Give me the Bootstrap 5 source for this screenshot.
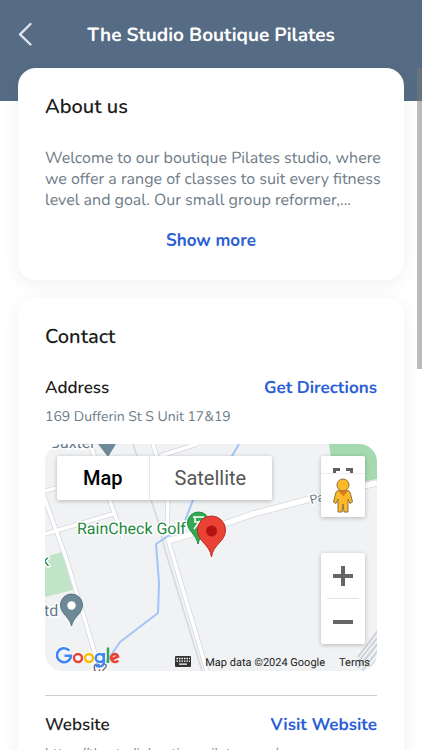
<!DOCTYPE html>
<html lang="en">
<head>
<meta charset="utf-8">
<meta name="viewport" content="width=device-width, initial-scale=1">
<title>The Studio Boutique Pilates</title>
<link href="https://cdn.jsdelivr.net/npm/bootstrap@5.3.0/dist/css/bootstrap.min.css" rel="stylesheet">
<style>
  body { font-family: Nunito, Lato, "Open Sans", sans-serif; color: #1c1e20; background: #fff; text-rendering: geometricPrecision; }
  .app-bar { background: #566c84; height: 101px; color: #fff; padding: 18px 16px 0; }
  .app-title { font-size: 19px; line-height: 34px; font-weight: 700; padding-right: 20px; }
  .back-btn { width: 20px; height: 32px; color: #dfe5f0; }
  .panels { margin-top: -33px; padding: 0 18px; gap: 18px; }
  .panel { border: 0; border-radius: 18px; padding: 27px; box-shadow: 0 4px 18px rgba(40, 50, 100, .07); }
  .panel-title { font-size: 20px; line-height: 26px; font-weight: 600; }
  .about-text { font-size: 16px; line-height: 21px; color: #6e7c87; margin: 27px -8px 18px 0; }
  .row-title { font-size: 17px; line-height: 24px; font-weight: 600; }
  .action { font-size: 17px; line-height: 24px; font-weight: 700; color: #2b60d6; text-decoration: none; }
  .address-row { margin-top: 26px; }
  .detail { font-size: 14px; line-height: 20px; color: #6e7c87; padding-top: 6px; }
  .map-box { height: 227px; border-radius: 18px; background: #f0f2f4; font-family: Roboto, sans-serif; margin: 17px 0 24px; }
  .map-art text { font-family: Roboto, sans-serif; }
  .map-layer { inset: 0; padding: 12px 12px 0; }
  .map-ctl { background: #fff; box-shadow: 0 1px 4px rgba(0, 0, 0, .25); border-radius: 2px; }
  .map-ctl button { background: none; border: 0; padding: 0; color: #565656; }
  .type-ctl button { font-size: 20px; line-height: 44px; padding: 0 26px; }
  .type-ctl .selected { color: #000; font-weight: 500; box-shadow: 1px 0 0 #e8e8e8; }
  .ctl-col { width: 44px; gap: 36px; }
  .view-ctl { height: 61px; }
  .zoom-ctl { height: 91px; }
  .zoom-ctl hr { margin: 0 6px; color: #999; }
  .map-foot { left: 0; right: 0; bottom: 0; padding: 0 7px 0 11px; height: 26px; gap: 14px; font-size: 11px; line-height: 16px; color: #222; }
  .map-foot a { color: #222; text-decoration: none; }
  .divider { margin: 0 0 18px; color: #8a9499; opacity: .45; }
  .scroll-thumb { top: 68px; right: 0; width: 5px; height: 301px; background: rgba(120, 120, 120, .5); }
</style>
<script src="https://cdn.jsdelivr.net/npm/bootstrap@5.3.0/dist/js/bootstrap.bundle.min.js"></script>
</head>
<body>
<div class="vh-100 overflow-hidden position-relative">
  <header class="app-bar d-flex align-items-start">
    <button class="back-btn btn p-0 border-0" type="button" aria-label="Back">
      <svg class="d-block" width="20" height="32" viewBox="0 0 20 32" fill="none" stroke="currentColor" stroke-width="2.4" stroke-linecap="round" stroke-linejoin="round"><path d="M14.500 6 L4 16.300 L14.500 26.500"/></svg>
    </button>
    <h1 class="app-title flex-fill text-center mb-0">The Studio Boutique Pilates</h1>
  </header>

  <main class="panels d-flex flex-column">
    <section class="panel card">
      <h2 class="panel-title mb-0">About us</h2>
      <p class="about-text">Welcome to our boutique Pilates studio, where we offer a range of classes to suit every fitness level and goal. Our small group reformer,...</p>
      <button class="action btn p-0 border-0 align-self-center" type="button">Show more</button>
    </section>

    <section class="panel card">
      <h2 class="panel-title mb-0">Contact</h2>
      <div class="address-row d-flex justify-content-between">
        <h3 class="row-title mb-0">Address</h3>
        <a class="action" href="#directions">Get Directions</a>
      </div>
      <div class="detail">169 Dufferin St S Unit 17&amp;19</div>

      <div class="map-box position-relative overflow-hidden">
        <svg class="map-art d-block w-100 h-100" viewBox="0 0 332 227" preserveAspectRatio="xMidYMid slice" fill="none">
          <path fill="#a5d9b0" d="M284 0H332V35L322 37L290 44Z"/>
          <path fill="#c0e4c8" d="M0 113L17 108L28 146L0 153Z"/>
          <g stroke="#d4d7dc" stroke-width="5">
            <path d="M-4 44L22 117L55 226M0 47L62 30M0 90L68 70M45 0L78 94M108 0L123 50L122 92L162 227M115 12L152 0"/>
            <path stroke-width="7" d="M123 97L182 79L208 70L265 55L332 39"/>
          </g>
          <g stroke="#fff" stroke-width="3.500">
            <path d="M-4 44L22 117L55 226M0 47L62 30M0 90L68 70M45 0L78 94M108 0L123 50L122 92L162 227M115 12L152 0"/>
            <path stroke-width="5.500" d="M123 97L182 79L208 70L265 55L332 39"/>
          </g>
          <path stroke="#d5d8dc" stroke-width="1.500" d="M88 0L112 74L120 106L157 227"/>
          <path stroke="#a2c4fa" stroke-width="2" stroke-linejoin="round" d="M194 0L187 12L148 56L138 82L111 100L114 139L113 169L75 198L58 223"/>
          <g stroke="#cdd0d5" stroke-width="2"><path d="M335 184L313 213M337 188L313 218M339 192L313 224M341 196L317 227M343 200L322 228"/></g>
          <g stroke="#fff" stroke-width="3" paint-order="stroke" stroke-linejoin="round">
            <text x="5" y="4" font-size="16" fill="#61788a">Baxter</text>
            <text x="32" y="90" font-size="16" fill="#22893f">RainCheck Golf</text>
            <text x="266" y="60" font-size="12" fill="#61788a" transform="rotate(-14 266 60)">Park</text>
            <text x="-4" y="122" font-size="16" fill="#22893f">k</text>
            <text x="-1" y="172" font-size="16" fill="#61788a">td</text>
            <text x="48" y="228" font-size="12" fill="#4a4a4a">C2</text>
          </g>
          <path fill="#6d8998" d="M53 0H71L63 13Z"/>
          <path fill="#6d8998" stroke="#5a7482" d="M26.500 182C25 173 15.500 170 15.500 161A11 11 0 0 1 37.500 161C37.500 170 28 173 26.500 182Z"/>
          <circle cx="26.500" cy="161.500" r="4.200" fill="#fff"/>
          <path fill="#34a853" stroke="#1e8e3e" d="M153 100C151 90 142.500 87 142.500 79A11 11 0 0 1 164.500 79C164.500 87 155 90 153 100Z"/>
          <path stroke="#fff" stroke-width="1.600" d="M148 73H159M150 73V78H157M155 77L149 85M157 76V85"/>
          <path fill="#ea4335" stroke="#b92b20" d="M166.500 113C165 100 152.500 98 152.500 86A14 14 0 0 1 180.500 86C180.500 98 168 100 166.500 113Z"/>
          <circle cx="166.500" cy="87" r="5.500" fill="#b31412"/>
        </svg>

        <div class="map-layer position-absolute d-flex justify-content-between align-items-start">
          <div class="type-ctl map-ctl d-flex" role="group" aria-label="Map type">
            <button class="selected" type="button">Map</button>
            <button type="button">Satellite</button>
          </div>
          <div class="ctl-col d-flex flex-column">
            <div class="view-ctl map-ctl">
              <button class="d-block w-100" type="button" aria-label="Street view and full screen">
                <svg class="d-block" width="44" height="61" viewBox="0 0 44 61" fill="none">
                  <path stroke="#606060" stroke-width="3" d="M13.500 17V13.500H19M25 13.500H30.500V17"/>
                  <path stroke="#eee" d="M0 17.500H44"/>
                  <path fill="#fbb829" stroke="#8a733e" stroke-linejoin="round" d="M17 34.500H27Q29 35 29.500 38L31.500 46L29 47.500L27 43V56H23L22 48L21 56H17V43L15 47.500L12.500 46L14.500 38Q15 35 17 34.500Z"/>
                  <path fill="#e07b16" d="M16.500 34H27.500L22.500 40.500Z"/>
                  <circle cx="22" cy="29" r="6" fill="#fbb829" stroke="#8a733e"/>
                </svg>
              </button>
            </div>
            <div class="zoom-ctl map-ctl d-flex flex-column">
              <button class="flex-fill" type="button" aria-label="Zoom in"><svg class="d-block mx-auto" width="20" height="20" fill="#666"><path d="M8 0h4v8h8v4h-8v8H8v-8H0V8h8z"/></svg></button>
              <hr>
              <button class="flex-fill" type="button" aria-label="Zoom out"><svg class="d-block mx-auto" width="20" height="20" fill="#666"><path d="M0 8h20v4H0z"/></svg></button>
            </div>
          </div>
        </div>

        <div class="map-foot position-absolute d-flex align-items-end">
          <svg class="flex-shrink-0 me-auto" width="64" height="26" viewBox="0 0 64 26" role="img" aria-label="Google" fill="none" stroke-width="2.500">
            <g stroke="#fff" stroke-width="4.500" opacity=".8"><path d="M13.500 5.500A7 7 0 1 0 15 11H8.500"/><circle cx="22" cy="13" r="4"/><circle cx="33" cy="13" r="4"/><circle cx="43.500" cy="13" r="4"/></g>
            <path stroke="#4285f4" d="M13.300 5.600A7 7 0 1 0 15 10.800H8.500"/>
            <circle cx="22" cy="13" r="4" stroke="#ea4335"/>
            <circle cx="33" cy="13" r="4" stroke="#fbbc04"/>
            <path stroke="#4285f4" d="M47.800 8V17.500Q47.500 21.500 43.500 21.500Q40.500 21.500 39.500 19M47.800 13A4 4 0 1 1 39.800 13A4 4 0 1 1 47.800 13"/>
            <path stroke="#34a853" d="M52 2.500V18"/>
            <path stroke="#ea4335" d="M55.500 14.500L62 11.500Q61 9 58.800 9A4 4 0 1 0 62.200 15.500"/>
          </svg>
          <button class="btn p-0 border-0 mb-1" type="button" aria-label="Keyboard shortcuts">
            <svg class="d-block" width="16" height="11" viewBox="0 0 16 11"><rect width="16" height="11" rx="1" fill="#333"/><path stroke="#fff" stroke-width="1.300" stroke-dasharray="1.500 1" d="M1.500 2.500H15M1.500 5.200H15"/><path stroke="#fff" stroke-width="1.300" d="M4 8.200H12"/></svg>
          </button>
          <span>Map data ©2024 Google</span>
          <a href="#terms">Terms</a>
        </div>
      </div>

      <hr class="divider">
      <div class="d-flex justify-content-between">
        <h3 class="row-title mb-0">Website</h3>
        <a class="action" href="#website">Visit Website</a>
      </div>
      <div class="detail text-truncate">https://thestudioboutiquepilates.com/</div>
    </section>
  </main>
  <div class="scroll-thumb position-absolute"></div>
</div>
</body>
</html>
